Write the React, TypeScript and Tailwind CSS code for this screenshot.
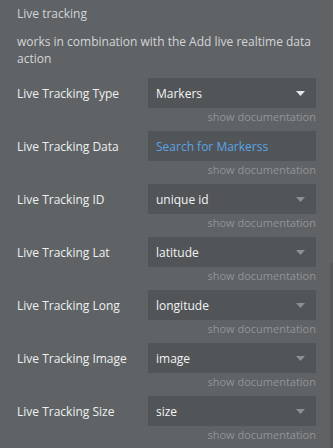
import React from "react";

type Row = { label: string; value: string; kind: "select" | "search"; bright?: boolean };

const rows: Row[] = [
  { label: "Live Tracking Type", value: "Markers", kind: "select", bright: true },
  { label: "Live Tracking Data", value: "Search for Markerss", kind: "search" },
  { label: "Live Tracking ID", value: "unique id", kind: "select" },
  { label: "Live Tracking Lat", value: "latitude", kind: "select" },
  { label: "Live Tracking Long", value: "longitude", kind: "select" },
  { label: "Live Tracking Image", value: "image", kind: "select" },
  { label: "Live Tracking Size", value: "size", kind: "select" },
];

function Arrow({ bright }: { bright?: boolean }) {
  return (
    <svg width="9" height="5" viewBox="0 0 9 5" className="shrink-0">
      <path d="M0 0 H9 L4.5 5 Z" fill={bright ? "#e4e7ea" : "#8d9093"} />
    </svg>
  );
}

export default function App() {
  return (
    <div
      className="relative h-[448px] w-[333px] overflow-hidden bg-[#5f6366] px-[17px] pt-[5px]"
      style={{ fontFamily: '"Open Sans", "Liberation Sans", sans-serif' }}
    >
      <div className="text-[12px] leading-[17px] text-[#d3d5d7]">Live tracking</div>
      <div className="mr-[-10px] mt-[11px] text-[12px] leading-[17px] text-[#d3d5d7]">
        works in combination with the Add live realtime data action
      </div>
      <div className="mt-[11px] flex flex-col">
        {rows.map((r) => (
          <div key={r.label} className="flex flex-col">
            <div className="flex items-center">
              <div className="w-[131px] text-[12px] leading-[17px] text-[#eef0f1]">{r.label}</div>
              <div className="flex h-[30px] w-[168px] items-center justify-between bg-[#515558] pl-2 pr-[11px]">
                <span
                  className={
                    r.kind === "search"
                      ? "text-[12px] leading-[17px] text-[#5ba4e6]"
                      : "text-[12px] leading-[17px] text-[#f2f3f4]"
                  }
                >
                  {r.value}
                </span>
                {r.kind === "select" && <Arrow bright={r.bright} />}
              </div>
            </div>
            <div className="mb-[6px] mt-[1px] text-right text-[11px] leading-[16px] text-[#919497]">
              show documentation
            </div>
          </div>
        ))}
      </div>
      <div className="absolute right-0 top-[263px] h-[185px] w-[3px] bg-[#575a5d]" />
    </div>
  );
}
